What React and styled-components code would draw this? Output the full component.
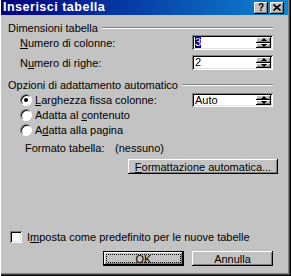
import React from 'react'
import styled, { createGlobalStyle } from 'styled-components'

const Global = createGlobalStyle`
  body {
    margin: 0;
    background: #c3c3c3;
    font-family: "Liberation Sans", Arial, sans-serif;
    font-size: 11px;
    color: #000;
  }
`

const Window = styled.div`
  width: 291px;
  height: 276px;
  box-sizing: border-box;
  background: #c3c3c3;
  border-left: 1px solid #fff;
  box-shadow: inset -1px -1px #000, inset -2px -2px #404040, inset -3px -3px #808080;
  display: flex;
  flex-direction: column;
`

const TitleBar = styled.div`
  height: 15px;
  margin-right: 3px;
  padding: 0 4px 0 2px;
  display: flex;
  align-items: center;
  background: linear-gradient(to right, #000080, #1084d0);
  color: #fff;
  font-weight: bold;
  font-size: 12.5px;
  letter-spacing: 0.5px;
`

const TitleText = styled.span`
  flex: 1;
  line-height: 15px;
`

const TitleButton = styled.div`
  width: 14px;
  height: 12px;
  box-sizing: border-box;
  background: #c3c3c3;
  box-shadow: inset -1px -1px #000, inset 1px 1px #fff, inset -2px -2px #808080;
  margin-left: ${p => p.gap || 0}px;
  display: flex;
  align-items: center;
  justify-content: center;
  color: #000;
  font-size: 10px;
  font-weight: bold;
  letter-spacing: 0;
  line-height: 12px;
`

const Body = styled.div`
  display: flex;
  flex-direction: column;
  padding-right: 18px;
`

const Section = styled.div`
  display: flex;
  align-items: center;
  height: 12px;
  margin-top: ${p => p.top}px;
  padding-left: 7px;
  white-space: nowrap;
`

const Groove = styled.div`
  flex: 1;
  height: 0;
  margin-left: 4px;
  border-top: 1px solid #808080;
  border-bottom: 1px solid #fff;
`

const Row = styled.div`
  display: flex;
  align-items: center;
  height: ${p => p.h || 15}px;
  margin-top: ${p => p.top}px;
  padding-left: ${p => p.left}px;
  white-space: nowrap;
`

const Label = styled.span`
  flex: 1;
`

const SpinBox = styled.div`
  width: 81px;
  height: ${p => p.h || 15}px;
  box-sizing: border-box;
  background: #fff;
  box-shadow: inset 1px 1px #808080, inset -1px -1px #fff, inset 2px 2px #000, inset -2px -2px #dfdfdf;
  display: flex;
  align-items: center;
  padding: 2px;
`

const SpinValue = styled.div`
  flex: 1;
  padding-left: 1px;
  line-height: 11px;
`

const Selected = styled.span`
  background: #000080;
  color: #fff;
`

const Arrows = styled.div`
  width: 15px;
  align-self: stretch;
  display: flex;
  flex-direction: column;
`

const ArrowBtn = styled.div`
  flex: 1;
  background: #c3c3c3;
  box-shadow: inset -1px -1px #000, inset 1px 1px #fff, inset -2px -2px #808080;
  display: flex;
  align-items: center;
  justify-content: center;
  &::after {
    content: "";
    width: 0;
    height: 0;
    border-left: 3px solid transparent;
    border-right: 3px solid transparent;
    ${p => (p.down ? 'border-top: 3px solid #000;' : 'border-bottom: 3px solid #000;')}
  }
`

const Radio = styled.div`
  width: 12px;
  height: 12px;
  box-sizing: border-box;
  border-radius: 50%;
  background: #fff;
  border: 1px solid;
  border-color: #808080 #fff #fff #808080;
  box-shadow: inset 1px 1px #000;
  margin-right: 3px;
  display: flex;
  align-items: center;
  justify-content: center;
  &::after {
    content: "";
    width: 4px;
    height: 4px;
    border-radius: 50%;
    background: ${p => (p.checked ? '#000' : 'transparent')};
  }
`

const RadioLabel = styled.span`
  flex: 1;
`

const InfoLabel = styled.span`
  width: 90px;
`

const Button = styled.div`
  width: ${p => p.w}px;
  height: 15px;
  box-sizing: border-box;
  background: #c3c3c3;
  box-shadow: ${p =>
    p.primary
      ? 'inset -1px -1px #000, inset 1px 1px #000, inset -2px -2px #000, inset 2px 2px #fff, inset -3px -3px #808080'
      : 'inset -1px -1px #000, inset 1px 1px #fff, inset -2px -2px #808080'};
  display: flex;
  align-items: center;
  justify-content: center;
  margin-left: ${p => p.gap || 0}px;
  position: relative;
  &::before {
    content: "";
    display: ${p => (p.primary ? 'block' : 'none')};
    position: absolute;
    inset: 3px;
    border: 1px dotted #000;
  }
`

const ButtonRow = styled.div`
  display: flex;
  justify-content: flex-end;
  margin-top: ${p => p.top}px;
  margin-right: ${p => p.right || 0}px;
`

const Check = styled.div`
  width: 12px;
  height: 12px;
  box-sizing: border-box;
  background: #fff;
  box-shadow: inset 1px 1px #808080, inset -1px -1px #fff, inset 2px 2px #000, inset -2px -2px #dfdfdf;
  margin-right: 5px;
`

const Field = ({ label, value, top, h }) => (
  <Row top={top} left={19} h={h}>
    <Label>{label}</Label>
    <SpinBox h={h}>
      <SpinValue>{value}</SpinValue>
      <Arrows>
        <ArrowBtn />
        <ArrowBtn down />
      </Arrows>
    </SpinBox>
  </Row>
)

export default function App() {
  return (
    <Window>
      <Global />
      <TitleBar>
        <TitleText>Inserisci tabella</TitleText>
        <TitleButton>?</TitleButton>
        <TitleButton gap={2}>
          <svg width="8" height="7" viewBox="0 0 8 7">
            <path d="M0.5 0.5 L7.5 6.5 M7.5 0.5 L0.5 6.5" stroke="#000" strokeWidth="1.6" />
          </svg>
        </TitleButton>
      </TitleBar>
      <Body>
        <Section top={7}>
          Dimensioni tabella
          <Groove />
        </Section>
        <Field top={1} label={<><u>N</u>umero di colonne:</>} value={<Selected>3</Selected>} />
        <Field top={5} label={<>N<u>u</u>mero di righe:</>} value="2" />

        <Section top={9}>
          Opzioni di adattamento automatico
          <Groove />
        </Section>
        <Row top={2} left={19} h={14}>
          <Radio checked />
          <RadioLabel><u>L</u>arghezza fissa colonne:</RadioLabel>
          <SpinBox h={14}>
            <SpinValue>Auto</SpinValue>
            <Arrows>
              <ArrowBtn />
              <ArrowBtn down />
            </Arrows>
          </SpinBox>
        </Row>
        <Row top={1} left={19} h={14}>
          <Radio />
          <RadioLabel>Adatta al <u>c</u>ontenuto</RadioLabel>
        </Row>
        <Row top={1} left={19} h={14}>
          <Radio />
          <RadioLabel>A<u>d</u>atta alla pagina</RadioLabel>
        </Row>
        <Row top={5} left={24} h={12}>
          <InfoLabel>Formato tabella:</InfoLabel>
          <span>(nessuno)</span>
        </Row>
        <ButtonRow top={5} right={-5}>
          <Button w={150}><span><u>F</u>ormattazione automatica...</span></Button>
        </ButtonRow>

        <Row top={56} left={9} h={13}>
          <Check />
          <span>I<u>m</u>posta come predefinito per le nuove tabelle</span>
        </Row>
        <ButtonRow top={8}>
          <Button w={81} primary>OK</Button>
          <Button w={81} gap={8}>Annulla</Button>
        </ButtonRow>
      </Body>
    </Window>
  )
}
